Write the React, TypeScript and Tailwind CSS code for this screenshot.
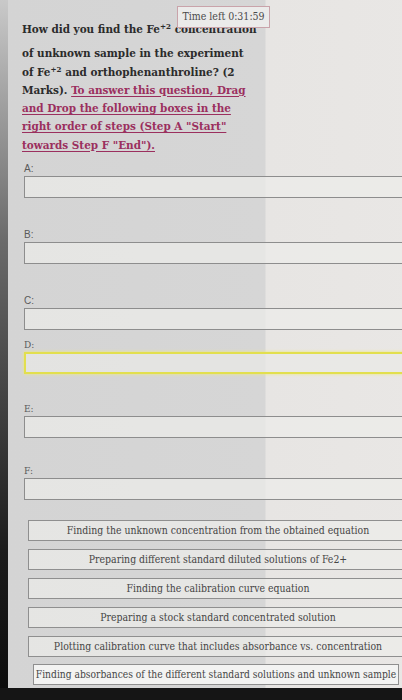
const serif = "font-['DejaVu_Serif_Condensed','DejaVu_Serif',serif]";

const slots = [
  { label: "A:", gap: "mt-[7px]", sans: true },
  { label: "B:", gap: "mt-[29px]", sans: true },
  { label: "C:", gap: "mt-[29px]", sans: true },
  { label: "D:", gap: "mt-[7px]", sans: false, active: true },
  { label: "E:", gap: "mt-[27px]", sans: false },
  { label: "F:", gap: "mt-[25px]", sans: false },
];

const steps = [
  "Finding the unknown concentration from the obtained equation",
  "Preparing different standard diluted solutions of Fe2+",
  "Finding the calibration curve equation",
  "Preparing a stock standard concentrated solution",
  "Plotting calibration curve that includes absorbance vs. concentration",
];

function Slot({ label, gap, sans, active }: { label: string; gap: string; sans: boolean; active?: boolean }) {
  return (
    <div className={gap}>
      <div
        className={
          "h-[15px] leading-[15px] text-[#5a5a5a] " +
          (sans ? "font-['Liberation_Sans',sans-serif] text-[10px]" : `${serif} text-[10px]`)
        }
      >
        {label}
      </div>
      {active ? (
        <div className="h-[22px] w-[400px] border-2 border-[#e2df4e] bg-[#e9e9e7]/70 shadow-[0_0_3px_#eeea7a]" />
      ) : (
        <div className="h-[22px] w-[400px] border border-[#8d8d8d] bg-[#ececea]/70" />
      )}
    </div>
  );
}

export default function App() {
  return (
    <div className="flex h-[700px] w-[402px] flex-col overflow-hidden bg-[#111]">
      <div className="flex flex-1 overflow-hidden">
        <div className="w-[8px] shrink-0 bg-[linear-gradient(to_bottom,#c9c9c9,#6a6a6a_35%,#1c1c1c_80%,#0d0d0d)]" />
        <div className="relative flex-1 bg-[linear-gradient(to_right,#d4d4d4_0,#d6d6d6_257px,#e7e5e3_258px,#e9e7e5)] pl-[16px]">
          <div className={`${serif} absolute left-[169px] top-[6px] z-10 flex h-[22px] w-[93px] items-center justify-center border border-[#c9a3aa] bg-[#ebebea] text-[10.5px] text-[#4a4a4a]`}>
            Time left 0:31:59
          </div>
          <div className={`${serif} -ml-[2px] mt-[20px] text-[11.6px] font-bold leading-[18.3px] text-[#2b2b2b]`}>
            <p className="pb-[6px]">
              How did you find the Fe<sup className="text-[8px]">+2</sup> concentration
            </p>
            <p>
              of unknown sample in the experiment
              <br />
              of Fe<sup className="text-[8px]">+2</sup> and orthophenanthroline? (2
              <br />
              Marks).{" "}
              <span className="text-[#9b2f5e] underline decoration-[#9b2f5e] underline-offset-2">
                To answer this question, Drag
                <br />
                and Drop the following boxes in the
                <br />
                right order of steps (Step A "Start"
                <br />
                towards Step F "End").
              </span>
            </p>
          </div>

          {slots.map((s) => (
            <Slot key={s.label} {...s} />
          ))}

          <div className={`${serif} mt-[20px] flex flex-col gap-[8px] pl-[4px] text-[10.4px] text-[#454545]`}>
            {steps.map((t) => (
              <div
                key={t}
                className="flex h-[21px] w-[380px] items-center justify-center border border-[#8f8f8f] bg-[#ececea]/70"
              >
                {t}
              </div>
            ))}
            <div className="-mt-[1px] ml-[5px] flex h-[21px] w-[366px] items-center justify-center whitespace-nowrap border border-[#8f8f8f] bg-[#f3f3f2] text-[10.2px]">
              Finding absorbances of the different standard solutions and unknown sample
            </div>
          </div>
        </div>
      </div>
      <div className="h-[12px] shrink-0 bg-[#151515]" />
    </div>
  );
}
